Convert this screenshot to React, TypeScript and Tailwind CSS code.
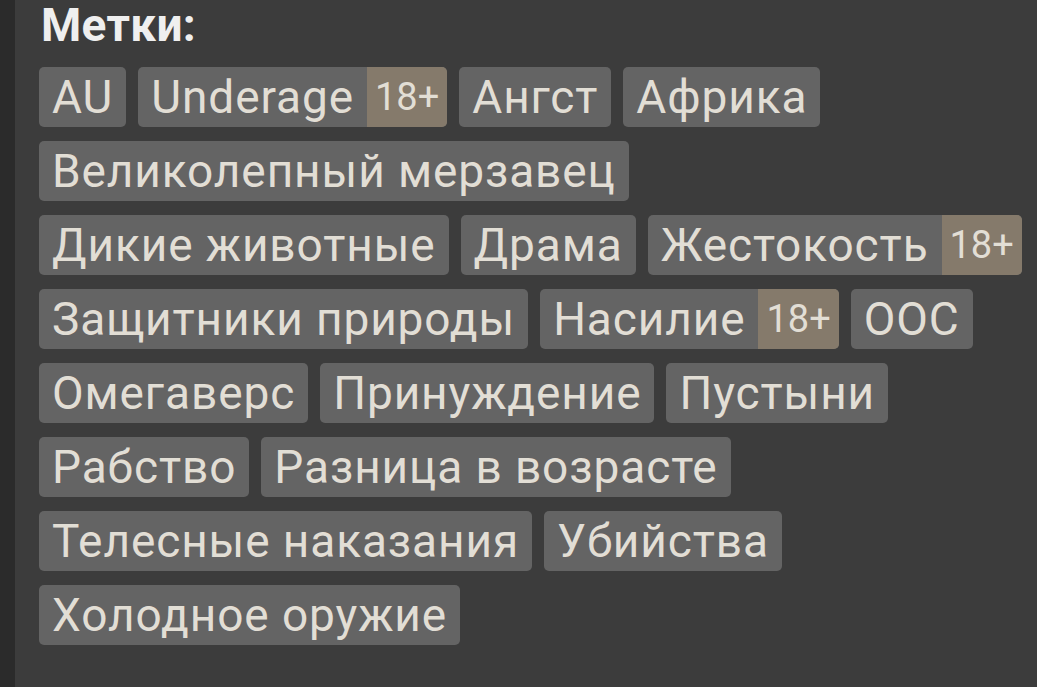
type Tag = {
  name: string;
  adult?: boolean;
};

const tags: Tag[] = [
  { name: "AU" },
  { name: "Underage", adult: true },
  { name: "Ангст" },
  { name: "Африка" },
  { name: "Великолепный мерзавец" },
  { name: "Дикие животные" },
  { name: "Драма" },
  { name: "Жестокость", adult: true },
  { name: "Защитники природы" },
  { name: "Насилие", adult: true },
  { name: "OOC" },
  { name: "Омегаверс" },
  { name: "Принуждение" },
  { name: "Пустыни" },
  { name: "Рабство" },
  { name: "Разница в возрасте" },
  { name: "Телесные наказания" },
  { name: "Убийства" },
  { name: "Холодное оружие" },
];

function TagChip({ tag }: { tag: Tag }) {
  return (
    <div className="flex h-[60px] items-stretch overflow-hidden rounded-[5px] bg-[#646464]">
      <span className="flex items-center px-[13px] text-[46px] leading-none tracking-[0.9px] text-[#e2ded5]">
        {tag.name}
      </span>
      {tag.adult && (
        <span className="flex items-center bg-[#857a6b] px-[8px] text-[38px] leading-none text-[#e2ded5]">
          18+
        </span>
      )}
    </div>
  );
}

export default function App() {
  return (
    <div className="flex h-[687px] w-[1037px] overflow-hidden bg-[#3c3c3c] font-['Roboto',sans-serif]">
      <div className="w-[15px] shrink-0 bg-[#2b2b2b]" />
      <div className="flex flex-1 flex-col pl-[24px] pr-[10px]">
        <h2 className="pl-[2px] pt-[2px] text-[46px] font-bold leading-[46px] tracking-[0.3px] text-[#efefef]">Метки:</h2>
        <div className="mt-[19px] flex flex-wrap gap-x-[12px] gap-y-[14px]">
          {tags.map((t) => (
            <TagChip key={t.name} tag={t} />
          ))}
        </div>
      </div>
    </div>
  );
}
